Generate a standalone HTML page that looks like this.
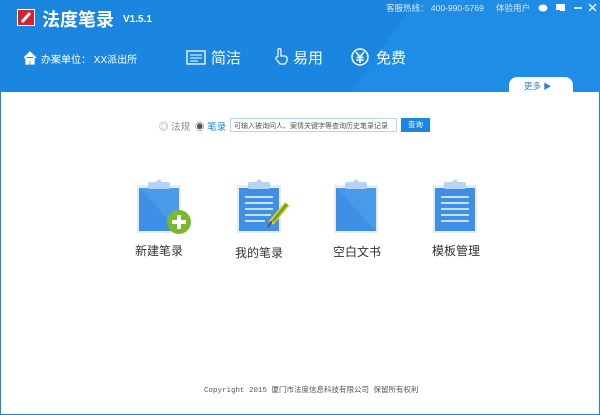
<!DOCTYPE html>
<html><head><meta charset="utf-8"><style>
*{margin:0;padding:0;box-sizing:border-box}
body{width:600px;height:415px;overflow:hidden;background:#fff;font-family:"Liberation Sans","Noto Sans CJK SC",sans-serif;position:relative;border-left:1px solid #1a86e0;border-right:1px solid #1a86e0;border-bottom:1px solid #1a86e0}
.hdr{position:absolute;left:0;top:0;width:600px;height:92px;background:#1a86e0;overflow:hidden}
.hdr .diag{position:absolute;left:380px;top:-20px;width:400px;height:140px;background:#1f8ce6;transform:skewX(-35deg)}
.a{position:absolute;white-space:nowrap}
.w{color:#fff}
.lbl{position:absolute;font-size:12px;color:#333}
</style></head><body>
<div class="hdr"><div class="diag"></div>
<div class="a" style="left:16px;top:9px;width:18px;height:17px;background:#d8222a;border:1px solid #fff"><svg width="16" height="15"><path d="M4 12 L12 3" stroke="#fff" stroke-width="3"/></svg></div>
<div class="a w" style="left:41px;top:6px;font-size:18px;font-weight:bold">法度笔录</div>
<div class="a w" style="left:122px;top:14px;font-size:10px;font-weight:bold">V1.5.1</div>
<svg class="a" style="left:22px;top:51px" width="14" height="14"><path d="M1 7 L7 1 L13 7 M3 6 V13 H6 V9 H8 V13 H11 V6" fill="#fff" stroke="#fff" stroke-width="1.3"/></svg>
<div class="a w" style="left:40px;top:51px;font-size:10px">办案单位： XX派出所</div>
<svg class="a" style="left:185px;top:50px" width="20" height="15"><rect x="1" y="1" width="18" height="13" fill="none" stroke="#fff" stroke-width="1.3"/><path d="M4 5H16M4 8H16M4 11H12" stroke="#fff"/></svg>
<div class="a w" style="left:210px;top:47px;font-size:15px">简洁</div>
<svg class="a" style="left:273px;top:47px" width="14" height="18"><path d="M4 10 V3 a1.5 1.5 0 0 1 3 0 V9 h4 a2 2 0 0 1 2 2 v3 l-2 3 H6 L2 12 a1.5 1.5 0 0 1 2-2" fill="none" stroke="#fff" stroke-width="1.2"/></svg>
<div class="a w" style="left:292px;top:47px;font-size:15px">易用</div>
<svg class="a" style="left:350px;top:48px" width="18" height="18"><circle cx="9" cy="9" r="8" fill="none" stroke="#fff" stroke-width="1.5"/><path d="M5 4 L9 9 L13 4 M9 9 V15 M5.5 9.5H12.5M5.5 12H12.5" stroke="#fff" stroke-width="1.5" fill="none"/></svg>
<div class="a w" style="left:375px;top:47px;font-size:15px">免费</div>
<div class="a" style="left:385px;top:2px;font-size:8.5px;color:#dbe9f8">客服热线： 400-990-5769</div>
<div class="a" style="left:495px;top:2px;font-size:8.5px;color:#dbe9f8">体验用户</div>
<svg class="a" style="left:537px;top:3px" width="60" height="10"><ellipse cx="5" cy="5" rx="4.5" ry="3.5" fill="#fff"/><rect x="18" y="1" width="9" height="6" fill="#fff"/><rect x="22" y="3" width="5" height="5" fill="#fff"/><path d="M36 5H44" stroke="#fff" stroke-width="1.5"/><path d="M51 1L58 8M58 1L51 8" stroke="#fff" stroke-width="1.3"/></svg>
<div class="a" style="left:508px;top:77px;width:64px;height:16px;background:#fff;border-radius:8px 8px 0 0"></div>
<div class="a" style="left:523px;top:80px;font-size:8.5px;color:#2d7fd0">更多 <span style="font-size:8px">▶</span></div>
</div>
<div class="a" style="left:158px;top:119px;font-size:9.5px;color:#888">◎ 法规</div>
<div class="a" style="left:194px;top:119px;font-size:9.5px;color:#1a86e0"><span style="color:#555">◉</span> 笔录</div>
<div class="a" style="left:229px;top:118px;width:167px;height:14px;border:1px solid #b8d4ee;font-size:7px;color:#555;padding:2px 0 0 3px;overflow:hidden">可输入被询问人、案情关键字等查询历史笔录记录</div>
<div class="a" style="left:400px;top:118px;width:29px;height:14px;background:#1a86e0;color:#fff;font-size:7.5px;text-align:center;line-height:14px">查询</div>

<svg class="a" style="left:134px;top:179px" width="60" height="60"><rect x="2" y="6" width="44" height="48" fill="#e6ecf2"/><rect x="4" y="9" width="40" height="43" fill="#3d90e6"/><path d="M4 9 L44 52 L44 9Z" fill="#4a9aea"/><rect x="13" y="3" width="22" height="7" rx="2" fill="#b5d4f5"/><circle cx="24" cy="3" r="2.5" fill="#b5d4f5"/><circle cx="44" cy="43" r="12" fill="#7ab82e"/><path d="M44 36V50M37 43H51" stroke="#fff" stroke-width="4"/></svg>
<svg class="a" style="left:234px;top:179px" width="60" height="60"><rect x="2" y="6" width="44" height="48" fill="#e6ecf2"/><rect x="4" y="9" width="40" height="43" fill="#3d90e6"/><rect x="13" y="3" width="22" height="7" rx="2" fill="#b5d4f5"/><circle cx="24" cy="3" r="2.5" fill="#b5d4f5"/><path d="M10 18H38M10 24H38M10 30H38M10 36H36M10 42H30" stroke="#c9e0f8" stroke-width="2"/><path d="M36 44 L52 25" stroke="#f0d020" stroke-width="6"/><path d="M38 42 L52 25" stroke="#6aa82a" stroke-width="3"/><path d="M33 48 L37 42" stroke="#555" stroke-width="2"/></svg>
<svg class="a" style="left:331px;top:179px" width="60" height="60"><rect x="2" y="6" width="44" height="48" fill="#e6ecf2"/><rect x="4" y="9" width="40" height="43" fill="#3d90e6"/><path d="M4 9 L44 52 L44 9Z" fill="#4a9aea"/><rect x="13" y="3" width="22" height="7" rx="2" fill="#b5d4f5"/><circle cx="24" cy="3" r="2.5" fill="#b5d4f5"/></svg>
<svg class="a" style="left:430px;top:179px" width="60" height="60"><rect x="2" y="6" width="44" height="48" fill="#e6ecf2"/><rect x="4" y="9" width="40" height="43" fill="#3d90e6"/><rect x="13" y="3" width="22" height="7" rx="2" fill="#b5d4f5"/><circle cx="24" cy="3" r="2.5" fill="#b5d4f5"/><path d="M10 18H38M10 24H38M10 30H38M10 36H38M10 42H38" stroke="#c9e0f8" stroke-width="2"/></svg>

<div class="lbl" style="left:134px;top:242px">新建笔录</div>
<div class="lbl" style="left:234px;top:244px">我的笔录</div>
<div class="lbl" style="left:332px;top:243px">空白文书</div>
<div class="lbl" style="left:431px;top:242px">模板管理</div>
<div class="a" style="left:203px;top:384px;font-size:7.5px;color:#555;font-family:'Liberation Mono','Noto Sans CJK SC',monospace">Copyright 2015 厦门市法度信息科技有限公司 保留所有权利</div>
</body></html>
